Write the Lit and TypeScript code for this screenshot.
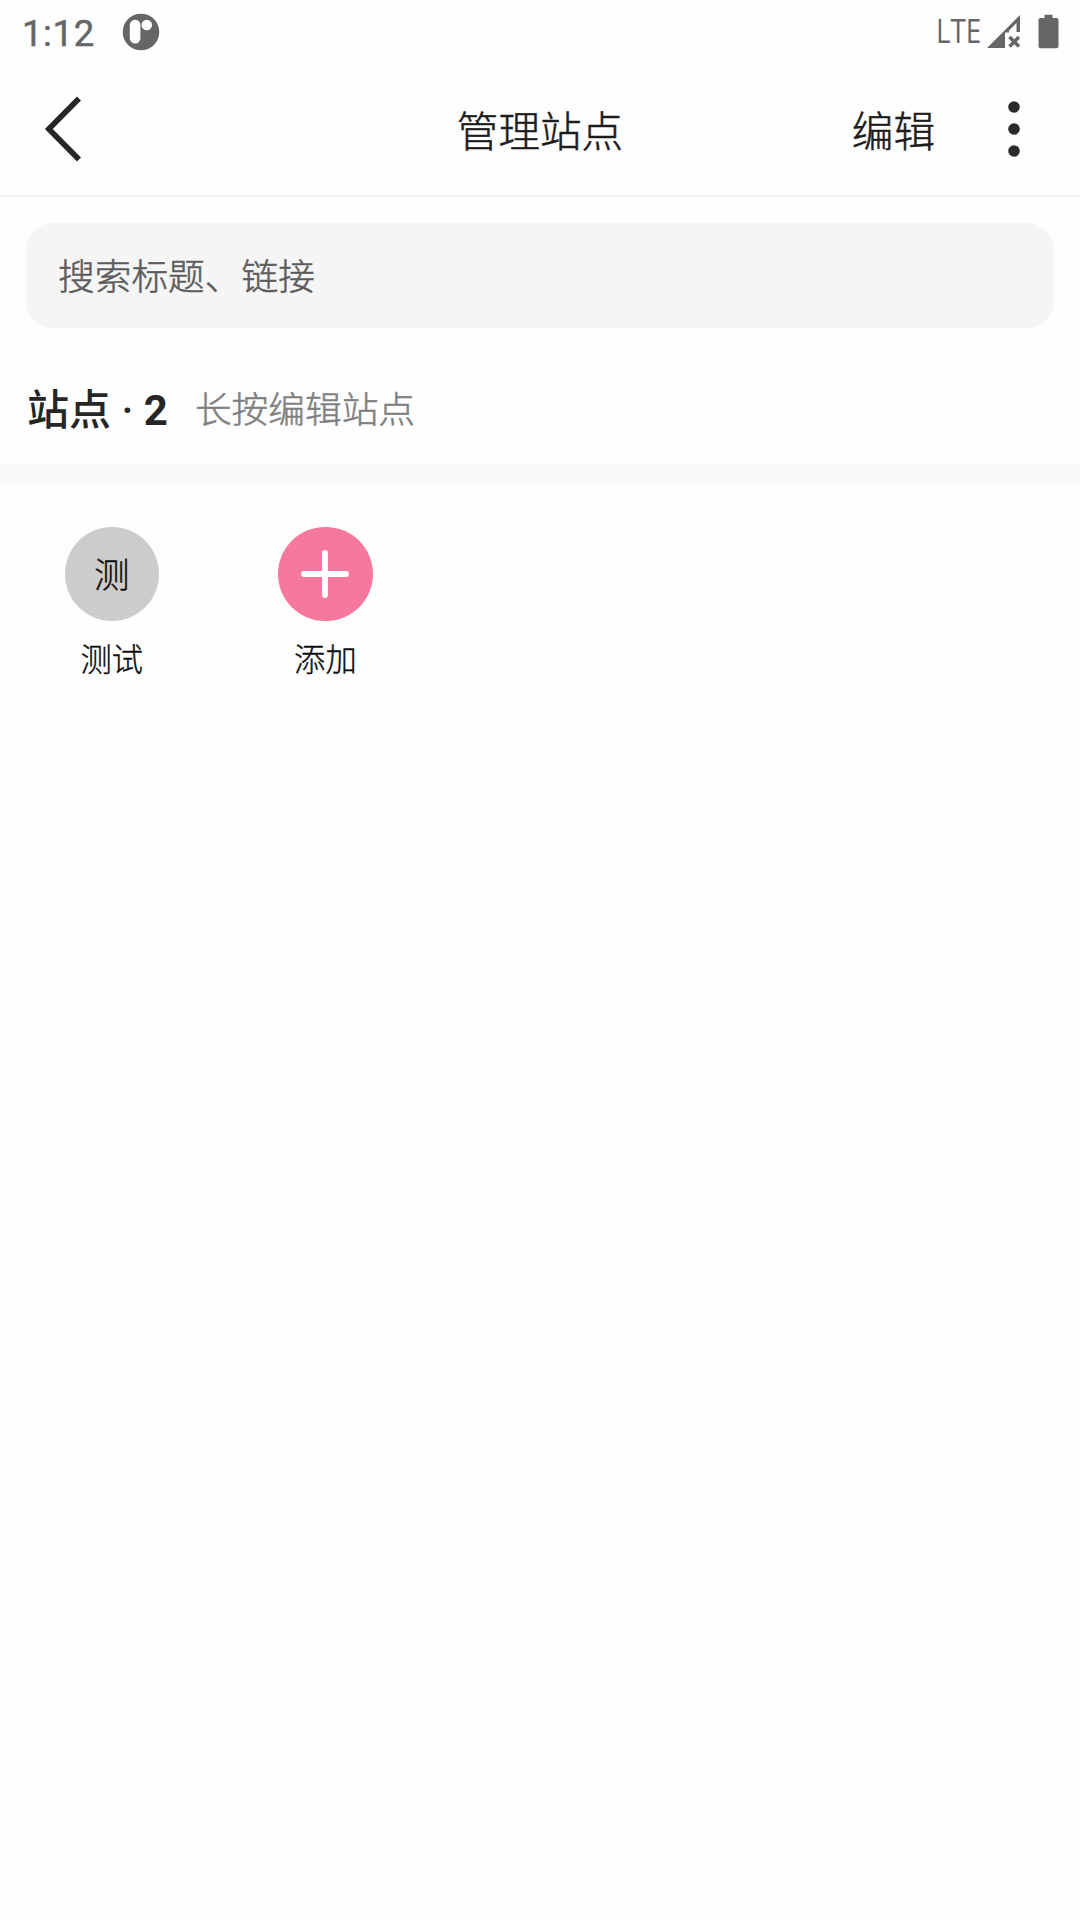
import { LitElement, html, css, svg } from "lit";
import { customElement, state } from "lit/decorators.js";

interface Site {
  title: string;
  glyph?: string;
}

@customElement("status-bar")
class StatusBar extends LitElement {
  static styles = css`
    :host {
      display: flex;
      align-items: flex-start;
      height: 64px;
      color: #666;
      font-family: Roboto, sans-serif;
    }
    .time {
      margin: 13px 0 0 22px;
      width: 100px;
      font-size: 36.5px;
      line-height: 42px;
      font-weight: 400;
      -webkit-text-stroke: 0.5px #666;
      letter-spacing: 0.6px;
    }
    .app {
      display: block;
      margin: 13px auto 0 0;
    }
    .network {
      margin-top: 12px;
      width: 51px;
      font-size: 32px;
      line-height: 38px;
      font-family: "Open Sans", sans-serif;
      transform: scaleX(0.87);
      transform-origin: left;
    }
    .signal {
      display: block;
      margin: 14px 17px 0 0;
    }
    .battery {
      display: block;
      margin: 14px 21px 0 0;
    }
  `;
  render() {
    return html`
      <span class="time">1:12</span>
      <svg class="app" width="38" height="38" viewBox="0 0 38 38">
        <circle cx="19" cy="19" r="18.3" fill="#666" />
        <rect x="7.8" y="6.8" width="10.6" height="23.8" rx="5.3" fill="#fff" />
        <circle cx="24.8" cy="12" r="5.3" fill="#fff" />
      </svg>
      <span class="network">LTE</span>
      <svg class="signal" width="34" height="35" viewBox="0 0 34 35" fill="#666">
        <path d="M33 1V18H29.5V9L22 16.5V18.5H18V34H0Z" />
        <path d="M22.5 23L32 32.5M32 23L22.5 32.5" stroke="#666" stroke-width="3.4" />
      </svg>
      <svg class="battery" width="21" height="35" viewBox="0 0 21 35" fill="#666">
        <path d="M6.5 .7H14.5V4H18.5Q20.5 4 20.5 6V32Q20.5 34.2 18.5 34.2H2.5Q.5 34.2 .5 32V6Q.5 4 2.5 4H6.5Z" />
      </svg>
    `;
  }
}

@customElement("title-bar")
class TitleBar extends LitElement {
  static styles = css`
    :host {
      display: grid;
      grid-template-columns: 1fr auto 1fr;
      align-items: center;
      height: 131px;
      border-bottom: 2px solid #f0f0f0;
      color: #1c1c1c;
      font-size: 41.6px;
      font-weight: 300;
      line-height: 60px;
      -webkit-text-stroke: 0.5px currentColor;
    }
    .back {
      display: block;
      margin: 0 0 1px 44px;
    }
    .text {
      padding-top: 6px;
    }
    .actions {
      display: flex;
      align-items: center;
      justify-content: flex-end;
    }
    .more {
      display: block;
      margin: 0 58px 1px 71px;
    }
  `;
  render() {
    return html`
      <svg class="back" width="40" height="66" viewBox="0 0 40 66">
        <path d="M35 2.5L4.8 33L35 63.5" fill="none" stroke="#262626" stroke-width="5.6" />
      </svg>
      <span class="text">管理站点</span>
      <div class="actions">
        <span class="text">编辑</span>
        <svg class="more" width="16" height="60" viewBox="0 0 16 60" fill="#2b2b2b">
          ${[8, 30, 52].map((y) => svg`<circle cx="8" cy=${y} r="5.8" />`)}
        </svg>
      </div>
    `;
  }
}

@customElement("site-item")
class SiteItem extends LitElement {
  static properties = { site: { attribute: false } };
  declare site: Site;
  static styles = css`
    :host {
      display: flex;
      flex-direction: column;
      align-items: center;
      color: #0d0d0d;
      font-weight: 300;
      -webkit-text-stroke: 0.35px currentColor;
    }
    .disc {
      display: grid;
      place-items: center;
      width: 94.5px;
      height: 94.5px;
      border-radius: 50%;
      background: #ccc;
      font-size: 35.5px;
      line-height: 50px;
    }
    .glyph {
      padding-top: 5px;
    }
    .add {
      background: #f6799d;
    }
    .label {
      margin-top: 17px;
      font-size: 31.3px;
      line-height: 46px;
    }
  `;
  render() {
    return html`
      ${this.site.glyph
        ? html`<div class="disc"><span class="glyph">${this.site.glyph}</span></div>`
        : html`<div class="disc add">
            <svg width="48" height="48" viewBox="0 0 48 48">
              <path d="M24 3V45M3 24H45" stroke="#fff" stroke-width="5.8" stroke-linecap="round" />
            </svg>
          </div>`}
      <span class="label">${this.site.title}</span>
    `;
  }
}

@customElement("app-root")
class AppRoot extends LitElement {
  static styles = css`
    :host {
      display: flex;
      flex-direction: column;
      min-height: 1920px;
      background: #fefefe;
      font-family: Roboto, "Noto Sans CJK SC", sans-serif;
    }
    .search {
      display: flex;
      align-items: center;
      box-sizing: border-box;
      height: 105px;
      margin: 26px 26px 0;
      padding: 5px 32px 0;
      border-radius: 27px;
      background: #f5f5f5;
      color: #5c5c5c;
      font-size: 36.7px;
      font-weight: 300;
      line-height: 54px;
      -webkit-text-stroke: 0.5px currentColor;
    }
    .section {
      display: flex;
      align-items: center;
      gap: 27px;
      box-sizing: border-box;
      height: 157px;
      padding: 30px 27px 0;
      border-bottom: 21px solid #fafafa;
    }
    .heading {
      color: #262626;
      font-size: 42px;
      line-height: 60px;
      font-weight: 500;
    }
    .count {
      font-weight: 700;
    }
    .hint {
      color: #808080;
      font-size: 36.7px;
      font-weight: 300;
      line-height: 54px;
      -webkit-text-stroke: 0.5px currentColor;
    }
    .sites {
      display: grid;
      grid-template-columns: repeat(5, 213.6px);
      padding: 41.5px 5px 0;
    }
  `;

  @state() private sites: Site[] = [{ title: "测试", glyph: "测" }, { title: "添加" }];

  render() {
    return html`
      <status-bar></status-bar>
      <title-bar></title-bar>
      <div class="search">搜索标题、链接</div>
      <div class="section">
        <span class="heading">站点 · <span class="count">${this.sites.length}</span></span>
        <span class="hint">长按编辑站点</span>
      </div>
      <div class="sites">${this.sites.map((s) => html`<site-item .site=${s}></site-item>`)}</div>
    `;
  }
}
